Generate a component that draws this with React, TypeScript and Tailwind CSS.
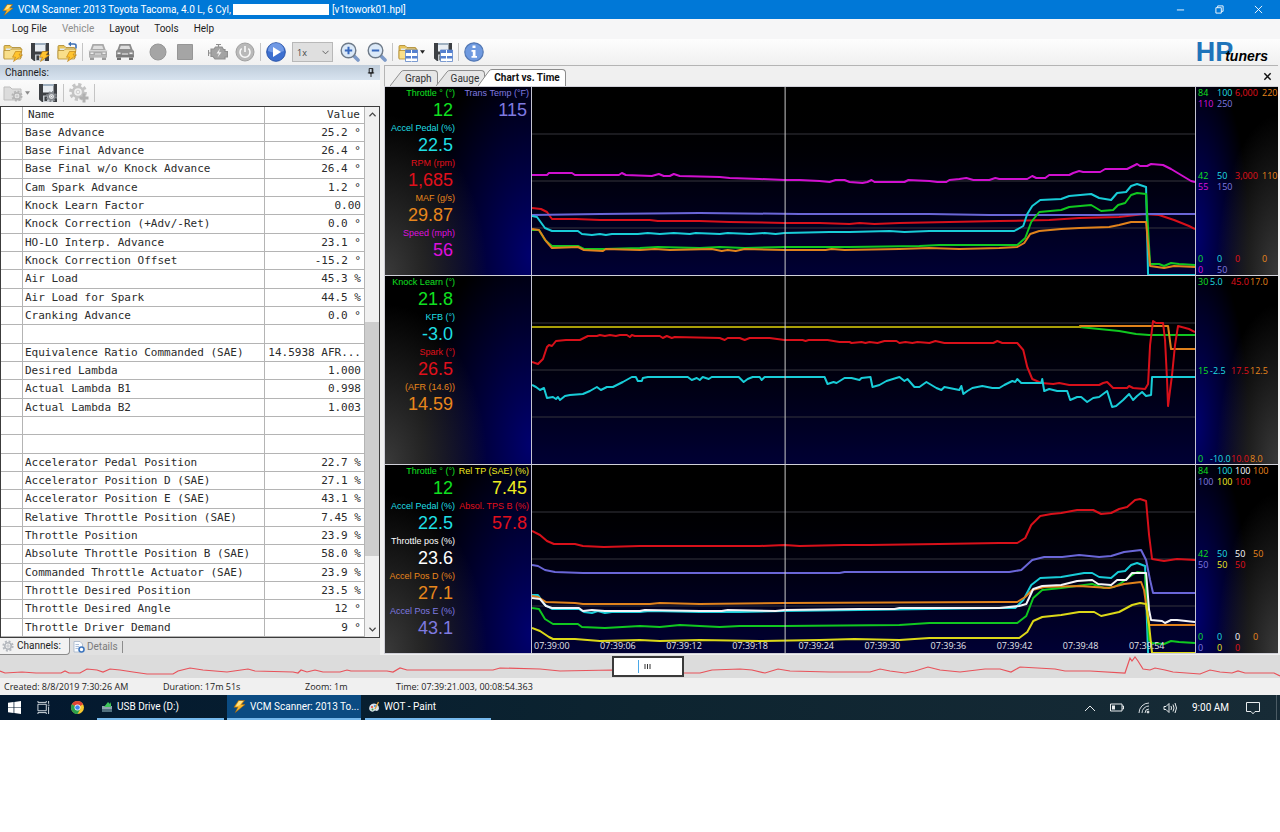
import React from 'react';

type Point = [number, number];

interface Series {
  color: string;
  points: Point[];
}

interface Reading {
  label: string;
  value: string;
  className: string;
}

interface Mark {
  text: string;
  className: string;
}

const GREEN = 'text-[#10e020]';
const CYAN = 'text-[#1fdfe4]';
const RED = 'text-[#e0101c]';
const ORANGE = 'text-[#e8861c]';
const MAGENTA = 'text-[#dd10dd]';
const VIOLET = 'text-[#7f7ae0]';
const YELLOW = 'text-[#f0ec20]';
const WHITE = 'text-white';

const channels: [string, string][] = [
  ['Base Advance', '25.2 °'],
  ['Base Final Advance', '26.4 °'],
  ['Base Final w/o Knock Advance', '26.4 °'],
  ['Cam Spark Advance', '1.2 °'],
  ['Knock Learn Factor', '0.00'],
  ['Knock Correction (+Adv/-Ret)', '0.0 °'],
  ['HO-LO Interp. Advance', '23.1 °'],
  ['Knock Correction Offset', '-15.2 °'],
  ['Air Load', '45.3 %'],
  ['Air Load for Spark', '44.5 %'],
  ['Cranking Advance', '0.0 °'],
  ['', ''],
  ['Equivalence Ratio Commanded (SAE)', '14.5938 AFR...'],
  ['Desired Lambda', '1.000'],
  ['Actual Lambda B1', '0.998'],
  ['Actual Lambda B2', '1.003'],
  ['', ''],
  ['', ''],
  ['Accelerator Pedal Position', '22.7 %'],
  ['Accelerator Position D (SAE)', '27.1 %'],
  ['Accelerator Position E (SAE)', '43.1 %'],
  ['Relative Throttle Position (SAE)', '7.45 %'],
  ['Throttle Position', '23.9 %'],
  ['Absolute Throttle Position B (SAE)', '58.0 %'],
  ['Commanded Throttle Actuator (SAE)', '23.9 %'],
  ['Throttle Desired Position', '23.5 %'],
  ['Throttle Desired Angle', '12 °'],
  ['Throttle Driver Demand', '9 °'],
];

const engineSeries: Series[] = [
  { color: '#d010d0', points: [[532,175],[547,175],[549,173],[572,173],[575,175],[619,175],[622,173],[626,175],[652,176],[659,174],[664,176],[670,176],[674,174],[680,176],[720,177],[730,178],[760,179],[785,180],[800,180],[820,181],[830,182],[836,180],[845,180],[850,182],[863,183],[868,182],[872,180],[875,182],[905,182],[909,180],[930,181],[938,182],[947,182],[950,180],[960,179],[967,178],[974,180],[990,180],[996,178],[1000,179],[1028,179],[1033,176],[1037,178],[1046,178],[1050,175],[1070,175],[1074,173],[1080,171],[1084,172],[1101,172],[1106,169],[1128,169],[1132,167],[1138,164],[1141,166],[1148,166],[1152,164],[1164,165],[1172,169],[1182,175],[1192,181],[1196,182]] },
  { color: '#d8101a', points: [[532,208],[541,209],[547,212],[552,219],[576,219],[600,220],[650,220],[658,221],[700,221],[730,222],[785,223],[820,223],[850,224],[860,223],[875,224],[900,223],[950,222],[1000,221],[1050,220],[1080,218],[1120,217],[1145,214],[1160,215],[1175,220],[1190,226],[1196,229]] },
  { color: '#6a66d8', points: [[532,215],[600,214],[700,213],[800,214],[930,214],[990,215],[1100,215],[1150,214],[1196,214]] },
  { color: '#18ccd8', points: [[532,216],[537,217],[545,228],[552,231],[578,231],[582,234],[592,235],[600,234],[606,235],[612,234],[638,234],[648,233],[660,234],[674,233],[690,234],[696,233],[720,234],[728,233],[750,234],[765,233],[776,234],[785,233],[830,232],[850,232],[890,231],[905,232],[930,231],[1015,231],[1024,226],[1028,214],[1033,206],[1041,200],[1062,199],[1070,196],[1092,194],[1100,198],[1112,200],[1118,193],[1127,192],[1132,186],[1138,184],[1147,187],[1149,275],[1196,275]] },
  { color: '#10c820', points: [[532,230],[539,230],[545,240],[552,246],[578,246],[584,249],[604,249],[640,248],[658,247],[700,248],[720,247],[745,248],[785,247],[850,247],[920,246],[940,245],[1000,245],[1018,245],[1026,238],[1032,222],[1040,212],[1062,210],[1070,207],[1092,205],[1102,211],[1114,210],[1119,205],[1126,203],[1132,195],[1138,193],[1147,194],[1151,264],[1160,264],[1165,266],[1172,263],[1180,264],[1196,265]] },
  { color: '#e0821c', points: [[532,229],[539,230],[546,241],[552,248],[578,247],[584,250],[603,251],[606,249],[640,250],[655,249],[670,250],[712,249],[722,251],[728,250],[736,251],[745,249],[785,250],[826,250],[832,249],[845,250],[900,249],[930,248],[960,249],[1000,248],[1018,247],[1025,243],[1031,234],[1040,231],[1062,229],[1080,228],[1110,227],[1120,225],[1132,222],[1147,222],[1151,266],[1165,268],[1175,266],[1196,267]] },
];

const sparkSeries: Series[] = [
  { color: '#10c820', points: [[1080,327],[1100,329],[1120,331],[1137,334],[1150,335],[1196,335]] },
  { color: '#e0821c', points: [[1080,326],[1169,326],[1172,349],[1196,349]] },
  { color: '#a89e08', points: [[532,327],[1082,327]] },
  { color: '#d8101a', points: [[532,362],[538,364],[543,359],[547,347],[549,345],[552,346],[556,341],[566,340],[580,340],[588,336],[597,336],[600,335],[605,336],[610,335],[616,336],[620,335],[627,335],[630,337],[632,335],[635,336],[660,336],[663,338],[667,336],[672,338],[675,337],[720,338],[725,340],[728,338],[740,338],[745,340],[750,338],[770,338],[785,340],[803,340],[806,341],[809,340],[828,340],[840,342],[850,342],[852,343],[862,342],[866,343],[870,342],[878,343],[885,341],[897,341],[900,343],[906,342],[913,343],[918,342],[930,343],[936,341],[945,343],[994,343],[998,341],[1003,343],[1018,343],[1024,350],[1028,367],[1033,379],[1042,383],[1054,384],[1060,383],[1070,385],[1100,385],[1104,383],[1108,382],[1114,388],[1128,388],[1130,386],[1134,388],[1146,389],[1149,384],[1151,345],[1154,321],[1157,323],[1164,323],[1166,340],[1168,380],[1169,406],[1173,375],[1176,345],[1179,326],[1190,329],[1196,332]] },
  { color: '#18ccd8', points: [[532,385],[536,387],[540,390],[544,388],[547,398],[553,397],[556,399],[558,397],[560,400],[565,396],[570,395],[583,394],[590,391],[597,387],[601,390],[607,387],[613,387],[623,382],[632,377],[636,377],[638,381],[642,381],[643,378],[648,377],[688,377],[692,380],[697,378],[700,380],[703,377],[709,379],[712,377],[739,377],[744,382],[748,379],[753,377],[760,377],[762,380],[765,377],[825,377],[828,384],[834,382],[837,383],[845,378],[852,378],[860,380],[862,378],[871,377],[873,387],[880,385],[887,381],[900,377],[905,381],[908,379],[915,387],[920,387],[927,382],[937,388],[942,390],[945,387],[950,388],[960,390],[962,386],[964,394],[968,391],[973,388],[983,386],[993,388],[1000,388],[1005,385],[1013,381],[1016,382],[1018,379],[1022,383],[1042,383],[1043,379],[1045,391],[1050,389],[1058,391],[1068,391],[1071,400],[1078,397],[1082,397],[1088,402],[1094,398],[1100,397],[1108,391],[1113,407],[1117,406],[1124,400],[1130,394],[1134,400],[1138,396],[1143,392],[1147,396],[1152,395],[1153,377],[1196,377]] },
];

const pedalSeries: Series[] = [
  { color: '#d8101a', points: [[532,531],[540,535],[547,541],[554,544],[575,544],[583,546],[604,547],[640,546],[680,546],[760,546],[785,545],[800,546],[845,545],[870,545],[940,544],[1000,543],[1018,543],[1026,538],[1032,525],[1041,516],[1052,514],[1062,513],[1078,510],[1094,510],[1102,514],[1112,513],[1120,509],[1128,507],[1136,500],[1141,499],[1147,501],[1150,535],[1153,559],[1165,561],[1178,559],[1196,560]] },
  { color: '#6a66d8', points: [[532,565],[538,566],[545,570],[555,572],[583,573],[800,573],[840,573],[845,572],[1010,572],[1022,570],[1033,560],[1045,557],[1063,557],[1080,555],[1100,557],[1112,556],[1125,552],[1142,550],[1147,560],[1151,580],[1154,593],[1196,593]] },
  { color: '#18ccd8', points: [[532,595],[538,595],[545,605],[552,609],[579,609],[584,612],[592,613],[598,611],[605,613],[612,612],[640,612],[650,611],[700,612],[740,612],[785,611],[860,610],[1000,608],[1016,608],[1024,600],[1032,585],[1041,578],[1062,577],[1085,573],[1093,573],[1100,577],[1112,578],[1119,572],[1126,571],[1132,565],[1138,563],[1146,566],[1149,653]] },
  { color: '#10c820', points: [[532,608],[539,609],[545,619],[553,624],[578,624],[582,627],[605,628],[640,626],[660,627],[680,625],[720,627],[740,626],[785,626],[900,625],[930,623],[1000,623],[1018,623],[1027,616],[1034,598],[1043,590],[1062,588],[1085,585],[1093,584],[1105,588],[1115,587],[1122,583],[1133,575],[1138,572],[1146,573],[1150,640],[1153,643],[1165,644],[1172,641],[1180,642],[1196,643]] },
  { color: '#e0821c', points: [[532,596],[538,597],[546,602],[575,603],[583,604],[650,604],[660,603],[700,604],[785,603],[1000,602],[1018,602],[1026,597],[1033,590],[1045,587],[1080,586],[1110,588],[1125,584],[1142,582],[1145,590],[1150,625],[1196,625]] },
  { color: '#f4f4f8', points: [[532,598],[540,599],[546,606],[552,608],[579,608],[583,611],[592,610],[605,611],[640,611],[645,610],[700,611],[722,611],[728,610],[776,611],[785,610],[860,609],[895,609],[900,608],[1000,608],[1020,606],[1027,604],[1034,589],[1043,586],[1062,585],[1078,581],[1093,580],[1099,584],[1112,585],[1118,580],[1127,580],[1133,573],[1147,573],[1150,610],[1152,620],[1163,621],[1166,623],[1172,620],[1178,620],[1196,622]] },
  { color: '#dcd818', points: [[532,628],[540,631],[549,637],[553,639],[575,639],[600,641],[640,640],[660,641],[700,640],[760,641],[820,640],[855,639],[900,640],[930,638],[1000,638],[1020,638],[1028,632],[1034,621],[1043,617],[1062,615],[1080,612],[1095,612],[1102,616],[1120,612],[1133,605],[1141,603],[1147,604],[1150,625],[1153,653],[1196,653]] },
];

const overview: Point[] = [[0,671],[5,673],[22,672],[36,673],[61,673],[65,671],[69,673],[80,673],[87,669],[97,670],[103,672],[110,669],[120,670],[133,672],[147,674],[173,674],[178,671],[190,668],[203,670],[227,672],[248,669],[255,671],[293,672],[298,673],[301,670],[307,672],[315,670],[323,672],[340,672],[347,670],[351,671],[387,671],[393,672],[400,668],[407,670],[493,670],[500,668],[540,669],[560,671],[612,670],[683,673],[700,673],[712,670],[740,669],[752,670],[765,673],[778,669],[790,671],[830,672],[870,672],[880,669],[890,671],[905,673],[915,671],[928,667],[940,670],[960,672],[985,669],[1000,669],[1011,672],[1020,667],[1055,669],[1065,671],[1090,671],[1125,673],[1130,658],[1132,661],[1135,657],[1138,661],[1143,669],[1150,670],[1155,668],[1165,670],[1173,672],[1200,674],[1210,670],[1220,672],[1232,673],[1238,671],[1245,673],[1274,673],[1280,676]];

const toPath = (points: Point[]) => points.map(([x, y]) => `${x},${y}`).join(' ');

const times = ['07:39:00', '07:39:06', '07:39:12', '07:39:18', '07:39:24', '07:39:30', '07:39:36', '07:39:42', '07:39:48', '07:39:54'];

/* ---------- icons ---------- */

const Bolt: React.FC<{ className?: string }> = ({ className }) => (
  <svg viewBox="0 0 14 14" className={className} aria-hidden="true">
    <path d="M6 0.5 12.5 0.5 9 4.8 13 4.8 2.5 13.5 5.2 7.8 1 7.8Z" fill="#fbb829" stroke="#a86408" strokeWidth="0.6" />
    <path d="M6.5 1.2 10.8 1.2 7.2 5.6 3 7Z" fill="#ffe489" />
  </svg>
);

const FolderShape = () => (
  <>
    <path d="M1 4.5Q1 3.5 2 3.5H7L9 5.5H17Q18 5.5 18 6.5V16H1Z" fill="#e9c55c" stroke="#a9862c" strokeWidth="0.8" />
    <path d="M3 6.5H17V14H3Z" fill="#dfeaf7" />
    <path d="M1 8.5H7L8.5 7H19L17.5 17H1Z" fill="#f9df8a" stroke="#b58d2d" strokeWidth="0.8" />
  </>
);

const DiskShape = () => (
  <>
    <path d="M1 1H19V19H4L1 16.5Z" fill="#3d4044" />
    <path d="M5 1H15.5V9.5H5Z" fill="#e8edf2" />
    <path d="M5 1H15.5V3H5Z" fill="#9fb0c0" />
    <path d="M5 12.5H15V19H5Z" fill="#c6cbd0" />
    <path d="M6.5 13.5H9V18H6.5Z" fill="#3d4044" />
  </>
);

const SmallBolt = () => (
  <path d="M12.5 9.5H18.5L16 13H19.5L10.5 19.5 12.5 15.2H9.5Z" fill="#ffc42e" stroke="#b87708" strokeWidth="0.6" />
);

const GridShape = () => (
  <>
    <path d="M7.5 8H19.5V19.5H7.5Z" fill="#fff" stroke="#5d84c6" strokeWidth="0.8" />
    <path d="M7.5 8H19.5V11H7.5ZM7.5 14H19.5V16.5H7.5Z" fill="#5580cf" />
    <path d="M13.5 8V19.5" stroke="#fff" strokeWidth="1" />
  </>
);

const Gear: React.FC<{ cx: number; cy: number; r: number; color: string; hole?: string }> = ({ cx, cy, r, color, hole = '#f1f1f1' }) => (
  <>
    <circle cx={cx} cy={cy} r={r} fill="none" stroke={color} strokeWidth={r * 0.45} strokeDasharray={`${r * 0.42} ${r * 0.365}`} />
    <circle cx={cx} cy={cy} r={r * 0.7} fill={hole} stroke={color} strokeWidth={r * 0.35} />
    <circle cx={cx} cy={cy} r={r * 0.25} fill={hole} stroke={color} strokeWidth="0.8" />
  </>
);

const CarShape: React.FC<{ dark?: boolean }> = ({ dark }) => (
  <>
    <path d="M4.5 2H15.5L17.5 7.5 19 9V15.5H1V9L2.5 7.5Z" fill={dark ? '#8c8c8c' : '#a9a9a9'} />
    <path d="M5.8 3.8H14.2L15.4 7H4.6Z" fill="#dedede" />
    <path d="M2 15.5H6V18H2ZM14 15.5H18V18H14Z" fill={dark ? '#6e6e6e' : '#9b9b9b'} />
    <path d="M2.5 10.5H5.5V12H2.5ZM14.5 10.5H17.5V12H14.5ZM7 11.5H13V12.5H7Z" fill="#ececec" />
    {!dark && <path d="M0 8.8H20" stroke="#e9e9e9" strokeWidth="1" />}
    <path d="M1.5 14H18.5" stroke={dark ? '#6a6a6a' : '#c9c9c9'} strokeWidth="1" />
  </>
);

const ToolButton: React.FC<{ label: string; disabled?: boolean; children: React.ReactNode }> = ({ label, disabled, children }) => (
  <button type="button" aria-label={label} disabled={disabled} className="size-5 shrink-0">
    <svg viewBox="0 0 20 20" className="size-5">{children}</svg>
  </button>
);

const Separator = () => <span className="w-px h-[18px] mx-[5px] bg-[#c4c4c4] shrink-0" />;

const Caret: React.FC<{ color?: string }> = ({ color = '#222' }) => (
  <svg viewBox="0 0 6 4" className="w-[5px] h-1" aria-hidden="true"><path d="M0 0H6L3 4Z" fill={color} /></svg>
);

/* ---------- window chrome ---------- */

const TitleBar = () => (
  <header className="h-[19px] bg-[#0078d7] text-white flex items-center font-['Roboto',sans-serif] text-[10px]">
    <Bolt className="size-3 ml-[2px] mr-1" />
    <h1 className="whitespace-pre">VCM Scanner: 2013 Toyota Tacoma, 4.0 L, 6 Cyl,</h1>
    <span className="bg-white w-24 h-[11px] ml-[2px] mr-[3px]" />
    <span>[v1towork01.hpl]</span>
    <div className="ml-auto mr-[2px] flex">
      <button type="button" aria-label="Minimize" className="w-[39px] h-[19px] flex items-center justify-center">
        <svg viewBox="0 0 10 10" className="size-[9px]"><path d="M1 5.5H9" stroke="#fff" /></svg>
      </button>
      <button type="button" aria-label="Restore" className="w-[39px] h-[19px] flex items-center justify-center">
        <svg viewBox="0 0 10 10" className="size-[9px]" fill="none" stroke="#fff"><path d="M1 3H7V9H1ZM3 3V1H9V7H7" /></svg>
      </button>
      <button type="button" aria-label="Close" className="w-[39px] h-[19px] flex items-center justify-center">
        <svg viewBox="0 0 10 10" className="size-[9px]"><path d="M1 1 9 9M9 1 1 9" stroke="#fff" /></svg>
      </button>
    </div>
  </header>
);

const MenuBar = () => (
  <nav className="h-5 bg-[#f6f6f7] flex items-center gap-[15px] pl-3 font-['Roboto',sans-serif] text-[10px] text-[#1c1c1c]">
    <button type="button">Log File</button>
    <button type="button" disabled className="text-[#8d8d8d]">Vehicle</button>
    <button type="button">Layout</button>
    <button type="button">Tools</button>
    <button type="button">Help</button>
  </nav>
);

const ToolBar = () => (
  <div className="h-[26px] bg-linear-to-b from-[#fdfdfd] to-[#f0f0f0] flex items-center pl-[3px] pr-3">
    <div className="flex gap-[7px]">
      <ToolButton label="Open log"><FolderShape /><SmallBolt /></ToolButton>
      <ToolButton label="Save log"><DiskShape /><SmallBolt /></ToolButton>
      <ToolButton label="Reopen log">
        <FolderShape /><SmallBolt />
        <path d="M19 6.5V3.5Q19 2 17 2H13" fill="none" stroke="#3d6fb4" strokeWidth="1.6" />
        <path d="M14 -0.5V4.5L11 2Z" fill="#3d6fb4" />
      </ToolButton>
    </div>
    <Separator />
    <div className="flex gap-[7px]">
      <ToolButton label="Connect" disabled><CarShape /></ToolButton>
      <ToolButton label="Disconnect" disabled><CarShape dark /></ToolButton>
    </div>
    <div className="flex gap-[7px] ml-[13px]">
      <ToolButton label="Record" disabled><circle cx="10" cy="10" r="8" fill="#a5a5a5" stroke="#969696" /></ToolButton>
      <ToolButton label="Stop" disabled><path d="M2.500 2.500H17.500V17.500H2.500Z" fill="#a5a5a5" stroke="#969696" /></ToolButton>
    </div>
    <div className="flex gap-[7px] ml-[13px]">
      <ToolButton label="Engine codes" disabled>
        <path d="M0.500 8V14M0.500 11H3M8 2.500H13M10.500 2.500V5.500M3 7H6L7.500 5H14L15.500 7.500H17V9.500H19.500V15H17V17H7L5 14.500H3Z" fill="#a3a3a3" stroke="#8f8f8f" strokeWidth="1.2" />
        <path d="M12 6.500 8.500 11.500H11L9.500 15.500 13.500 10.300H11Z" fill="#f3f3f3" />
      </ToolButton>
      <ToolButton label="Power" disabled>
        <circle cx="10" cy="10" r="9" fill="#b9b9b9" stroke="#a0a0a0" />
        <path d="M6.700 6.500A5 5 0 1 0 13.300 6.500M10 4V10" fill="none" stroke="#fafafa" strokeWidth="1.6" />
      </ToolButton>
    </div>
    <Separator />
    <ToolButton label="Play">
      <circle cx="10" cy="10" r="9.300" fill="#3c6fd0" stroke="#2c55a8" />
      <path d="M2 9A8 8 0 0 1 18 9Q10 12 2 9Z" fill="#86abee" opacity="0.7" />
      <path d="M7 5 15 10 7 15Z" fill="#fff" />
    </ToolButton>
    <div className="relative ml-[6px] mr-[7px]">
      <select aria-label="Playback speed" defaultValue="1x" className="appearance-none block w-[41px] h-5 bg-[#dfdfdf] border border-[#b8b8b8] text-[9px] leading-none pl-1 text-[#444]">
        <option>1x</option>
        <option>2x</option>
      </select>
      <svg viewBox="0 0 8 5" className="absolute right-[4px] top-[8px] w-[7px] h-[5px] pointer-events-none"><path d="M0.500 0.500 4 4 7.500 0.500" fill="none" stroke="#555" /></svg>
    </div>
    <div className="flex gap-[7px]">
      <ToolButton label="Zoom in">
        <path d="M13.500 13.500 18 18" stroke="#7d9ac8" strokeWidth="3.600" strokeLinecap="round" />
        <circle cx="8.500" cy="8.500" r="7.300" fill="#dbe9f8" stroke="#6e7a88" strokeWidth="1.400" />
        <path d="M4.800 8.500H12.200M8.500 4.800V12.200" stroke="#3869bd" strokeWidth="2" />
      </ToolButton>
      <ToolButton label="Zoom out">
        <path d="M13.500 13.500 18 18" stroke="#7d9ac8" strokeWidth="3.600" strokeLinecap="round" />
        <circle cx="8.500" cy="8.500" r="7.300" fill="#dbe9f8" stroke="#6e7a88" strokeWidth="1.400" />
        <path d="M4.800 8.500H12.200" stroke="#3869bd" strokeWidth="2" />
      </ToolButton>
    </div>
    <Separator />
    <button type="button" aria-label="Open layout" className="flex items-center gap-[2px] mr-[8px]">
      <svg viewBox="0 0 20 20" className="size-5"><FolderShape /><GridShape /></svg>
      <Caret />
    </button>
    <ToolButton label="Save layout"><DiskShape /><GridShape /></ToolButton>
    <Separator />
    <ToolButton label="Information">
      <circle cx="10" cy="10" r="9.200" fill="#6f9ae0" stroke="#5378b4" strokeWidth="1.200" />
      <path d="M8.500 3.500H11.500V6H8.500ZM7.500 8H11.500V14H13V15.800H7.500V14H8.800V9.700H7.500Z" fill="#fff" />
    </ToolButton>
    <p className="ml-auto pt-1 flex items-baseline font-['Liberation_Sans',sans-serif] font-bold leading-5">
      <span className="text-[27px] text-[#1f74ba]">HP</span>
      <span className="text-[14px] italic text-black -ml-2">tuners</span>
    </p>
  </div>
);

/* ---------- channels panel ---------- */

const ChannelsPanel = () => (
  <section className="w-[380px] shrink-0 flex flex-col">
    <h2 className="h-[15px] bg-linear-to-b from-[#bfccda] to-[#d7e3ef] flex items-center justify-between pl-[5px] pr-[5px] font-['Roboto',sans-serif] text-[10px] text-[#1c1c1c]">
      Channels:
      <svg viewBox="0 0 8 10" className="w-2 h-[9px]" fill="none" stroke="#111"><path d="M2 0.500H6V5.500H2ZM0.500 5.500H7.500M4 5.500V10M5.300 0.500V5.500" /></svg>
    </h2>
    <div className="h-[26px] bg-linear-to-b from-[#fbfbfb] to-[#efefef] flex items-center pl-[3px]">
      <button type="button" aria-label="Open channels" disabled className="flex items-center gap-[2px] mr-[8px]">
        <svg viewBox="0 0 20 20" className="size-5">
          <path d="M1 4H7L9 6H18V17H1Z" fill="#dcdcdc" stroke="#bdbdbd" />
          <Gear cx={14} cy={13} r={4.5} color="#b5b5b5" />
        </svg>
        <Caret color="#8a8a8a" />
      </button>
      <ToolButton label="Save channels"><DiskShape /><Gear cx={13.5} cy={13.5} r={4.500} color="#85898f" hole="#fff" /></ToolButton>
      <Separator />
      <ToolButton label="Add channel" disabled>
        <Gear cx={9} cy={9} r={7.300} color="#c4c4c4" />
        <path d="M15 10.500V19.500M10.500 15H19.500" stroke="#b0b0b0" strokeWidth="3" />
      </ToolButton>
      <Separator />
    </div>
    <div className="flex bg-white border border-[#3c3c3c]">
      <table className="flex-1 table-fixed border-separate border-spacing-0 font-['DejaVu_Sans_Mono',monospace] text-[11px] leading-[14px] text-[#2b2b2b]">
        <colgroup>
          <col className="w-[22px]" />
          <col />
          <col className="w-[100px]" />
        </colgroup>
        <thead>
          <tr className="h-[17px]">
            <th className="p-0 border-b border-r border-[#b4b4b4]" />
            <th className="p-0 pl-[5px] text-left font-normal border-b border-r border-[#b4b4b4]">Name</th>
            <th className="p-0 pr-1 text-right font-normal border-b border-r border-[#b4b4b4]">Value</th>
          </tr>
        </thead>
        <tbody>
          {channels.map(([name, value], i) => (
            <tr key={i} className="h-[18px] nth-[3n]:h-[19px]">
              <td className="p-0 border-b border-r border-[#b4b4b4]" />
              <td className="p-0 pl-[2px] whitespace-nowrap border-b border-r border-[#b4b4b4]">{name}</td>
              <td className="p-0 pr-[3px] text-right whitespace-nowrap border-b border-r border-[#b4b4b4]">{value}</td>
            </tr>
          ))}
        </tbody>
      </table>
      <div className="w-3.5 bg-[#f0f0f0] flex flex-col items-center py-[5px]">
        <svg viewBox="0 0 8 5" className="w-[7px] h-[5px]"><path d="M0.500 4.500 4 1 7.500 4.500" fill="none" stroke="#444" strokeWidth="1.400" /></svg>
        <span className="grow-[205]" />
        <span className="grow-[233] w-full bg-[#cdcdcd]" />
        <span className="grow-[71]" />
        <svg viewBox="0 0 8 5" className="w-[7px] h-[5px]"><path d="M0.500 0.500 4 4 7.500 0.500" fill="none" stroke="#444" strokeWidth="1.400" /></svg>
      </div>
    </div>
    <div className="h-[17px] bg-[#e1e1e1] flex font-['Roboto',sans-serif] text-[10px]">
      <button type="button" className="w-[70px] flex items-center gap-[3px] pl-[2px] bg-[#f2f2f2] border-b border-r border-[#8c8c8c] rounded-br-sm text-[#1c1c1c]">
        <svg viewBox="0 0 12 12" className="size-3"><Gear cx={6} cy={6} r={4.600} color="#b4b8be" /></svg>
        Channels:
      </button>
      <button type="button" className="flex items-center gap-[2px] pl-[3px] text-[#7b7b7b]">
        <svg viewBox="0 0 12 12" className="size-3">
          <path d="M1 0.500H7L9.500 3V11H1Z" fill="#fafcff" stroke="#a4b4c8" strokeWidth="0.800" />
          <path d="M2.500 3.500H6M2.500 5.500H6M2.500 7.500H5" stroke="#9cb1cf" strokeWidth="0.800" />
          <circle cx="8.500" cy="8.500" r="2.500" fill="#fff" stroke="#3f77bf" strokeWidth="1.600" />
        </svg>
        Details
      </button>
      <span className="w-px h-3 bg-[#8c8c8c] ml-1 mt-[3px]" />
    </div>
  </section>
);

/* ---------- charts ---------- */

const Tab: React.FC<{ label: string; active?: boolean }> = ({ label, active }) => (
  <button type="button" role="tab" aria-selected={!!active} className={active ? 'flex h-[17px] -ml-[7px] relative font-bold text-[#111]' : 'flex h-4 -ml-[2px] text-[#333]'}>
    <svg viewBox="0 0 14 17" preserveAspectRatio="none" className="w-3.5 h-full">
      <path d="M0 17 11 2Q12 0.500 14 0.500V17Z" fill={active ? '#fff' : '#e6e6e6'} />
      <path d="M0 17 11 2Q12 0.500 14 0.500" fill="none" stroke="#8c8c8c" />
    </svg>
    <span className={active ? 'h-full pr-[5px] pl-[2px] leading-4 bg-white border-t border-r border-[#8c8c8c] rounded-tr-sm' : 'h-full pr-[5px] pl-[1px] leading-[15px] bg-[#e6e6e6] border-t border-r border-[#8c8c8c] rounded-tr-sm'}>
      {label}
    </span>
  </button>
);

const ReadingColumn: React.FC<{ items: Reading[] }> = ({ items }) => (
  <dl>
    {items.map((item) => (
      <div key={item.label} className={`flex flex-col items-end whitespace-nowrap ${item.className}`}>
        <dt className="text-[9px] leading-3">{item.label}</dt>
        <dd className="text-[18px] leading-[22px] pr-[2px] pb-px">{item.value}</dd>
      </div>
    ))}
  </dl>
);

interface PaneProps {
  top: number;
  first: Reading[];
  second: Reading[];
  series: Series[];
  scale: Mark[][][];
  columns: string;
  footer?: React.ReactNode;
}

const ChartPane: React.FC<PaneProps> = ({ top, first, second, series, scale, columns, footer }) => (
  <div className="grid grid-cols-[146px_1fr_82px] border-t border-[#d0d0d8]">
    <div className="grid grid-cols-[70px_74px] content-start overflow-hidden font-['Liberation_Sans',sans-serif] bg-[radial-gradient(ellipse_70%_85%_at_0%_100%,#3a3a3a,transparent),radial-gradient(ellipse_75%_110%_at_100%_90%,#00006e,transparent)]">
      <ReadingColumn items={first} />
      <ReadingColumn items={second} />
    </div>
    <div className="relative min-w-0 border-x border-[#c4c4d0]">
      <svg viewBox={`532 ${top} 664 188`} preserveAspectRatio="none" className="block w-full h-[188px] bg-linear-to-b from-black to-[#000034]">
        {[47, 94, 141].map((y) => (
          <line key={y} x1="532" x2="1196" y1={top + y} y2={top + y} stroke="#34343c" />
        ))}
        {series.map((s, i) => (
          <polyline key={i} points={toPath(s.points)} fill="none" stroke={s.color} strokeWidth="2" strokeLinejoin="round" vectorEffect="non-scaling-stroke" />
        ))}
        <line x1="785.500" x2="785.500" y1={top} y2={top + 188} stroke="#c8c8c8" vectorEffect="non-scaling-stroke" />
      </svg>
      {footer}
    </div>
    <div className="flex flex-col justify-between pl-[2px] overflow-hidden text-[9px] leading-[11px] bg-[radial-gradient(ellipse_75%_85%_at_100%_100%,#3a3a3a,transparent),radial-gradient(ellipse_65%_95%_at_0%_80%,#00006e,transparent)]">
      {scale.map((rows, i) => (
        <div key={i}>
          {rows.map((row, j) => (
            <div key={j} className={`grid whitespace-nowrap ${columns}`}>
              {row.map((mark, k) => <span key={k} className={mark.className}>{mark.text}</span>)}
            </div>
          ))}
        </div>
      ))}
    </div>
  </div>
);

const marks = (texts: string[], colors: string[]): Mark[] => texts.map((text, i) => ({ text, className: colors[i] }));

const engineTop = [GREEN, CYAN, RED, ORANGE];
const engineLow = [MAGENTA, VIOLET];
const pedalTop = [GREEN, CYAN, WHITE, ORANGE];
const pedalLow = [VIOLET, YELLOW, RED];

const ChartArea = () => (
  <section className="flex-1 min-w-0 ml-1 mr-[2px] flex flex-col">
    <div className="h-[21px] bg-[#f0f0f0] border-t border-l border-[#b4b4b4] flex items-end justify-between font-['Roboto',sans-serif] text-[10px]">
      <div role="tablist" className="flex items-end pl-[7px]">
        <Tab label="Graph" />
        <Tab label="Gauge" />
        <Tab label="Chart vs. Time" active />
      </div>
      <button type="button" aria-label="Close tab" className="mb-[5px] mr-[6px]">
        <svg viewBox="0 0 10 10" className="size-[9px]"><path d="M1.500 1.500 8.500 8.500M8.500 1.500 1.500 8.500" stroke="#111" strokeWidth="1.600" /></svg>
      </button>
    </div>
    <div className="bg-black border-l border-b border-[#d0d0d8]">
      <ChartPane
        top={87}
        first={[
          { label: 'Throttle ° (°)', value: '12', className: GREEN },
          { label: 'Accel Pedal (%)', value: '22.5', className: CYAN },
          { label: 'RPM (rpm)', value: '1,685', className: RED },
          { label: 'MAF (g/s)', value: '29.87', className: ORANGE },
          { label: 'Speed (mph)', value: '56', className: MAGENTA },
        ]}
        second={[{ label: 'Trans Temp (°F)', value: '115', className: VIOLET }]}
        series={engineSeries}
        columns="grid-cols-[19px_18px_27px_1fr]"
        scale={[
          [marks(['84', '100', '6,000', '220'], engineTop), marks(['110', '250'], engineLow)],
          [marks(['42', '50', '3,000', '110'], engineTop), marks(['55', '150'], engineLow)],
          [marks(['0', '0', '0', '0'], engineTop), marks(['0', '50'], engineLow)],
        ]}
      />
      <ChartPane
        top={276}
        first={[
          { label: 'Knock Learn (°)', value: '21.8', className: GREEN },
          { label: 'KFB (°)', value: '-3.0', className: CYAN },
          { label: 'Spark (°)', value: '26.5', className: RED },
          { label: '(AFR (14.6))', value: '14.59', className: ORANGE },
        ]}
        second={[]}
        series={sparkSeries}
        columns="grid-cols-[12px_21px_19px_1fr]"
        scale={[
          [marks(['30', '5.0', '45.0', '17.0'], engineTop)],
          [marks(['15', '-2.5', '17.5', '12.5'], engineTop)],
          [marks(['0', '-10.0', '10.0', '8.0'], engineTop)],
        ]}
      />
      <ChartPane
        top={465}
        first={[
          { label: 'Throttle ° (°)', value: '12', className: GREEN },
          { label: 'Accel Pedal (%)', value: '22.5', className: CYAN },
          { label: 'Throttle pos (%)', value: '23.6', className: WHITE },
          { label: 'Accel Pos D (%)', value: '27.1', className: ORANGE },
          { label: 'Accel Pos E (%)', value: '43.1', className: VIOLET },
        ]}
        second={[
          { label: 'Rel TP (SAE) (%)', value: '7.45', className: YELLOW },
          { label: 'Absol. TPS B (%)', value: '57.8', className: RED },
        ]}
        series={pedalSeries}
        columns="grid-cols-[19px_18px_18px_1fr]"
        scale={[
          [marks(['84', '100', '100', '100'], pedalTop), marks(['100', '100', '100'], pedalLow)],
          [marks(['42', '50', '50', '50'], pedalTop), marks(['50', '50', '50'], pedalLow)],
          [marks(['0', '0', '0', '0'], pedalTop), marks(['0', '0', '0'], pedalLow)],
        ]}
        footer={
          <div className="absolute inset-x-0 bottom-0 grid grid-cols-10 pl-[2px] pb-[1px] text-[9px] leading-3 text-[#e4e4ea]">
            {times.map((t) => <time key={t}>{t}</time>)}
          </div>
        }
      />
    </div>
  </section>
);

/* ---------- bottom bars ---------- */

const Overview = () => (
  <div className="relative h-[23px] bg-[#dcdcdc]">
    <svg viewBox="0 655 1280 23" preserveAspectRatio="none" className="block w-full h-[23px]">
      <polyline points={toPath(overview)} fill="none" stroke="#e8525a" strokeWidth="1.200" vectorEffect="non-scaling-stroke" />
    </svg>
    <div className="absolute top-px left-[47.8%] w-[72px] h-[21px] bg-white border-2 border-[#3a3a3a] flex items-center">
      <span className="ml-6 w-px h-[13px] bg-[#4aa8e8]" />
      <svg viewBox="0 0 7 5" className="ml-[5px] w-[7px] h-[5px]"><path d="M1 0V5M3.500 0V5M6 0V5" stroke="#333" /></svg>
    </div>
  </div>
);

const StatusBar = () => (
  <footer className="h-[17px] bg-[#f0f0f0] grid grid-cols-[159px_142px_91px_1fr] items-center pl-1 text-[9px] text-[#1c1c1c]">
    <span>Created: 8/8/2019 7:30:26 AM</span>
    <span>Duration: 17m 51s</span>
    <span>Zoom: 1m</span>
    <span>Time: 07:39:21.003, 00:08:54.363</span>
  </footer>
);

const TaskBar = () => (
  <div className="h-[25px] bg-linear-to-r from-[#03182f] via-[#0d2430] to-[#172b36] flex items-center font-['Roboto',sans-serif] text-[10px] text-white">
    <button type="button" aria-label="Start" className="ml-2">
      <svg viewBox="0 0 14 14" className="size-[13px]"><path d="M0 2 6 1.100V6.600H0ZM6.800 1 14 0V6.600H6.800ZM0 7.400H6V12.900L0 12ZM6.800 7.400H14V14L6.800 13Z" fill="#fff" /></svg>
    </button>
    <button type="button" aria-label="Task view" className="ml-4">
      <svg viewBox="0 0 14 14" className="size-[13px]" fill="none" stroke="#e0e6ea"><path d="M1 3.500H10V10.500H1ZM1 0V1.500H10V0M1 14V12.500H10V14M12.500 0V3M12.500 6V14M11.500 4.500H13.500" /></svg>
    </button>
    <button type="button" aria-label="Chrome" className="ml-[21px]">
      <svg viewBox="0 0 14 14" className="size-[13px]">
        <circle cx="7" cy="7" r="7" fill="#f7c82e" />
        <path d="M7 7 0.940 3.500A7 7 0 0 1 13.060 3.500Z" fill="#de4436" />
        <path d="M7 7 0.940 3.500A7 7 0 0 0 7 14L10 8.500Z" fill="#2ba14c" />
        <circle cx="7" cy="7" r="3.200" fill="#fff" />
        <circle cx="7" cy="7" r="2.500" fill="#4285f0" />
      </svg>
    </button>
    <button type="button" className="ml-[13px] w-[127px] h-full flex items-center gap-1 pl-1 border-b-2 border-[#76b9ed]">
      <svg viewBox="0 0 12 12" className="size-3"><path d="M1 5H11V11H1Z" fill="#8fa3b0" /><path d="M1 8H11V11H1Z" fill="#51707f" /><path d="M3 6 7 1 9 3 10 1V6Z" fill="#3fc65a" /></svg>
      USB Drive (D:)
    </button>
    <button type="button" className="ml-[3px] w-[134px] h-full flex items-center gap-1 pl-[6px] whitespace-nowrap bg-[#0b4b82] border-b-2 border-[#76b9ed]">
      <Bolt className="size-[13px] shrink-0" />
      VCM Scanner: 2013 To...
    </button>
    <button type="button" className="ml-1 w-[126px] h-full flex items-center gap-1 pl-[3px] border-b-2 border-[#76b9ed]">
      <svg viewBox="0 0 12 12" className="size-3"><path d="M6 2.500Q11 3 11 7.500 10.500 11 7 9.500 5 11.500 2.500 10 0 8 2 4.500 3.500 2.500 6 2.500Z" fill="#d9e3ea" /><circle cx="4" cy="6" r="1.100" fill="#e3523e" /><circle cx="7" cy="5" r="1.100" fill="#3c8bd8" /><circle cx="4.500" cy="8.500" r="1" fill="#3da24c" /><path d="M7 8 10.500 1" stroke="#e0a33c" strokeWidth="1.400" /></svg>
      WOT - Paint
    </button>
    <div className="ml-auto flex items-center">
      <svg viewBox="0 0 12 8" className="w-3 h-2 mr-[14px]"><path d="M1 7 6 2 11 7" fill="none" stroke="#e8ecee" /></svg>
      <svg viewBox="0 0 14 9" className="w-3.5 h-[9px] mr-[14px]"><path d="M0.500 1H12V8H0.500ZM12 3H13.500V6H12" fill="none" stroke="#e8ecee" /><path d="M2 2.500H5V6.500H2Z" fill="#e8ecee" /></svg>
      <svg viewBox="0 0 12 12" className="size-3 mr-[13px]" fill="none" stroke="#d4dade"><path d="M1 11A10 10 0 0 1 11 1M4 11A7 7 0 0 1 11 4M7 11A4 4 0 0 1 11 7" /><circle cx="10" cy="10" r="1" fill="#fff" /></svg>
      <svg viewBox="0 0 15 12" className="w-[15px] h-3 mr-3.5" fill="none" stroke="#e8ecee"><path d="M1 4.500H3L6 1.500V10.500L3 7.500H1ZM8 4Q9 6 8 8M10 2.500Q12 6 10 9.500M12 1Q15 6 12 11" /></svg>
      <time className="whitespace-nowrap mr-[17px]">9:00 AM</time>
      <svg viewBox="0 0 14 14" className="size-3.5 mr-4" fill="none" stroke="#e8ecee"><path d="M0.500 1.500H13.500V10.500H9L7 12.800 5 10.500H0.500Z" /></svg>
      <span className="w-px h-[25px] mr-[3px] bg-[#4b5b64]" />
    </div>
  </div>
);

const App: React.FC = () => (
  <main className="bg-[#f0f0f0] font-['Open_Sans',sans-serif] leading-none">
    <TitleBar />
    <MenuBar />
    <ToolBar />
    <div className="flex">
      <ChannelsPanel />
      <ChartArea />
    </div>
    <Overview />
    <StatusBar />
    <TaskBar />
  </main>
);

export default App;
